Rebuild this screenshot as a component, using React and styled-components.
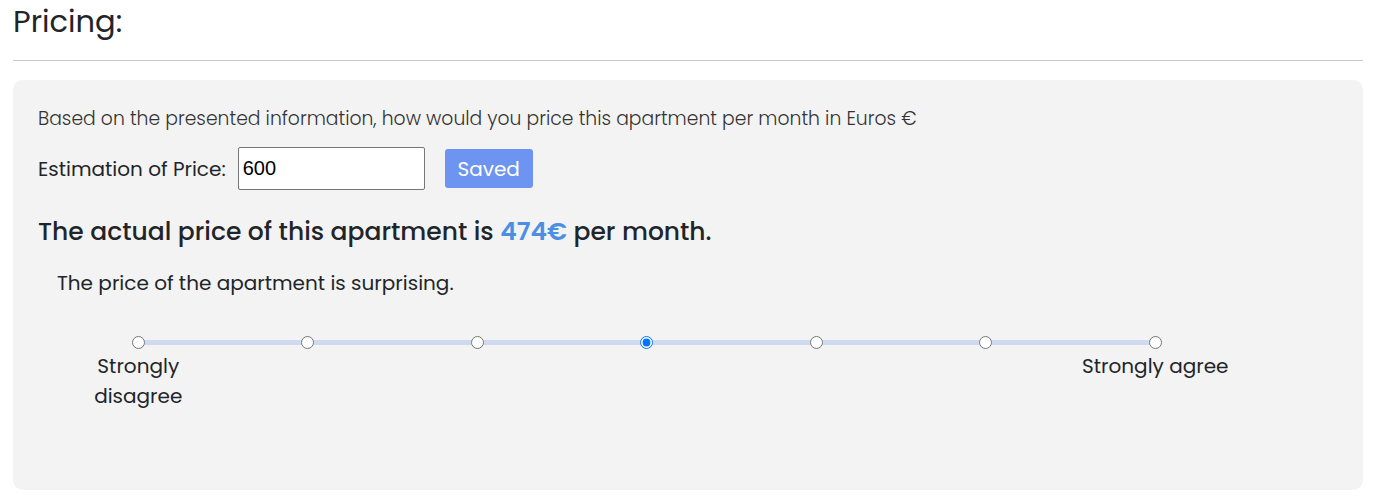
import React, { useState } from "react";
import styled, { createGlobalStyle } from "styled-components";

const GlobalStyle = createGlobalStyle`
  body {
    margin: 0;
    background: #fff;
    font-family: "Poppins", "Open Sans", "Liberation Sans", sans-serif;
    color: #212529;
  }
`;

const Page = styled.div`
  padding: 0 15px 0 13px;
`;

const Title = styled.h2`
  margin: 4px 0 0;
  font-size: 30.5px;
  font-weight: 400;
  line-height: 36px;
`;

const Divider = styled.hr`
  margin: 20px 0 19px;
  border: 0;
  border-top: 1px solid #c8c8c8;
`;

const Panel = styled.section`
  background: #f3f3f3;
  border-radius: 10px;
  padding: 24.5px 25px 79px;
`;

const Question = styled.p`
  margin: 0;
  font-size: 18.75px;
  line-height: 27px;
  font-weight: 300;
  color: #333;
`;

const EstimateRow = styled.div`
  display: flex;
  align-items: center;
  margin-top: 15.5px;
`;

const FieldLabel = styled.label`
  font-size: 20px;
  margin-right: 12px;
`;

const PriceInput = styled.input`
  box-sizing: border-box;
  width: 187px;
  height: 43px;
  padding: 1px 4px;
  border: 1px solid #767676;
  border-radius: 2px;
  background: #fff;
  font-family: "Liberation Sans", Arial, sans-serif;
  font-size: 20px;
  color: #000;
`;

const SaveButton = styled.button`
  margin-left: 20px;
  width: 88px;
  height: 39px;
  border: 0;
  border-radius: 3px;
  background: #6d94f0;
  color: #fff;
  font-family: inherit;
  font-size: 20px;
`;

const Result = styled.h3`
  margin: 27px 0 0;
  font-size: 25px;
  line-height: 30px;
  font-weight: 500;
`;

const Price = styled.span`
  color: #4a8fe2;
  font-weight: 600;
`;

const Statement = styled.p`
  margin: 21px 0 0 19px;
  font-size: 20px;
  line-height: 30px;
`;

const Scale = styled.div`
  display: grid;
  grid-template-columns: repeat(7, 169.5px);
  margin: 37.5px 0 0 15.5px;
`;

const Step = styled.div`
  display: flex;
  flex-direction: column;
  align-items: center;
  text-align: center;
`;

const Knob = styled.div`
  position: relative;
  align-self: stretch;
  display: flex;
  justify-content: center;
  height: 13px;

  &::before,
  &::after {
    content: "";
    position: absolute;
    top: 4px;
    height: 5px;
    width: 50%;
    background: #cfdaf0;
  }
  &::before {
    left: 0;
    display: ${({ $first }) => ($first ? "none" : "block")};
  }
  &::after {
    right: 0;
    display: ${({ $last }) => ($last ? "none" : "block")};
  }

  input {
    position: relative;
    z-index: 1;
    margin: 0;
    width: 13px;
    height: 13px;
  }
`;

const StepLabel = styled.span`
  margin-top: 2.5px;
  font-size: 20px;
  line-height: 30px;
`;

const labels = ["Strongly disagree", "", "", "", "", "", "Strongly agree"];

export default function App() {
  const [value, setValue] = useState(3);
  return (
    <Page>
      <GlobalStyle />
      <Title>Pricing:</Title>
      <Divider />
      <Panel>
        <Question>
          Based on the presented information, how would you price this
          apartment per month in Euros €
        </Question>
        <EstimateRow>
          <FieldLabel htmlFor="price">Estimation of Price:</FieldLabel>
          <PriceInput id="price" defaultValue="600" />
          <SaveButton>Saved</SaveButton>
        </EstimateRow>
        <Result>
          The actual price of this apartment is <Price>474€</Price> per month.
        </Result>
        <Statement>The price of the apartment is surprising.</Statement>
        <Scale>
          {labels.map((label, i) => (
            <Step key={i}>
              <Knob $first={i === 0} $last={i === labels.length - 1}>
                <input
                  type="radio"
                  name="surprising"
                  checked={value === i}
                  onChange={() => setValue(i)}
                />
              </Knob>
              {label && <StepLabel>{label}</StepLabel>}
            </Step>
          ))}
        </Scale>
      </Panel>
    </Page>
  );
}
